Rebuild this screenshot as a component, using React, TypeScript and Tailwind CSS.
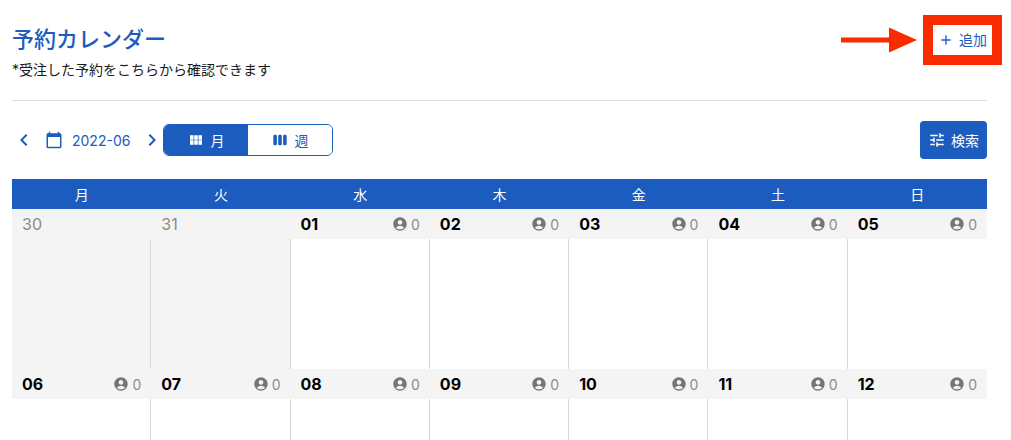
import React from "react";
import {
  MdAccountCircle,
  MdAdd,
  MdCalendarToday,
  MdChevronLeft,
  MdChevronRight,
  MdTune,
  MdViewModule,
  MdViewWeek,
} from "react-icons/md";

const weekdays = ["月", "火", "水", "木", "金", "土", "日"];

const rows = [
  [
    { day: "30", muted: true },
    { day: "31", muted: true },
    { day: "01" },
    { day: "02" },
    { day: "03" },
    { day: "04" },
    { day: "05" },
  ],
  [
    { day: "06" },
    { day: "07" },
    { day: "08" },
    { day: "09" },
    { day: "10" },
    { day: "11" },
    { day: "12" },
  ],
];

function DayCell({ day, muted, last }: { day: string; muted?: boolean; last: boolean }) {
  return (
    <div className="flex flex-col">
      <div className="flex h-[30px] items-center justify-between bg-[#f4f4f4] pl-[10px] pr-[10px]">
        {muted ? (
          <span className="text-[16px] text-[#8c8c8c]">{day}</span>
        ) : (
          <>
            <span className="text-[16px] font-bold text-black">{day}</span>
            <span className="flex items-center gap-[3px] text-[14px] text-[#8c8c8c]">
              <MdAccountCircle size={16} className="text-[#757575]" />0
            </span>
          </>
        )}
      </div>
      <div
        className={`h-[130px] ${muted ? "bg-[#f4f4f4]" : "bg-white"} ${
          last ? "" : "border-r border-[#d9d9d9]"
        }`}
      />
    </div>
  );
}

export default function App() {
  return (
    <div
      className="relative h-[440px] w-[1011px] overflow-hidden bg-white"
      style={{ fontFamily: 'Inter, "Noto Sans CJK JP", sans-serif' }}
    >
      <div className="px-[12px] pr-[24px] pt-[25px]">
        <div className="flex items-start justify-between">
          <div>
            <h1 className="text-[22px] font-medium leading-[28px] text-[#1c5cbe]">予約カレンダー</h1>
            <p className="mt-[7px] text-[14px] leading-[20px] text-[#1a1a1a]">*受注した予約をこちらから確認できます</p>
          </div>
          <button className="mt-[5px] flex items-center gap-[5px] text-[14px] leading-[20px] text-[#1c5cbe]">
            <MdAdd size={16} />
            追加
          </button>
        </div>

        <div className="mt-[20px] h-px bg-[#dedede]" />

        <div className="mt-[20px] flex h-[38px] items-center justify-between">
          <div className="flex items-center">
            <MdChevronLeft size={24} className="text-[#1c5cbe]" />
            <MdCalendarToday size={18} className="ml-[9px] text-[#1c5cbe]" />
            <span className="ml-[9px] text-[14px] text-[#1c5cbe]">2022-06</span>
            <MdChevronRight size={24} className="ml-[10px] text-[#1c5cbe]" />
            <div className="ml-[-1px] flex h-[32px] w-[170px] overflow-hidden rounded-[6px] border border-[#1c5cbe] text-[14px]">
              <div className="flex w-[84px] items-center justify-center gap-[6px] bg-[#1c5cbe] text-white">
                <MdViewModule size={16} />月
              </div>
              <div className="flex flex-1 items-center justify-center gap-[6px] bg-white text-[#1c5cbe]">
                <MdViewWeek size={16} />週
              </div>
            </div>
          </div>
          <button className="flex h-[38px] w-[67px] items-center justify-center gap-[5px] rounded-[4px] bg-[#1c5cbe] text-[14px] text-white">
            <MdTune size={18} />
            検索
          </button>
        </div>

        <div className="mt-[20px] grid h-[30px] grid-cols-7 bg-[#1c5cbe]">
          {weekdays.map((w) => (
            <div key={w} className="flex items-center justify-center text-[14px] text-white">
              {w}
            </div>
          ))}
        </div>

        {rows.map((row, i) => (
          <div key={i} className="grid grid-cols-7">
            {row.map((c, j) => (
              <DayCell key={c.day} day={c.day} muted={c.muted} last={j === 6} />
            ))}
          </div>
        ))}
      </div>

      {/* annotation on top of the screenshot */}
      <div className="absolute left-[923px] top-[15px] h-[50px] w-[79px] border-[10px] border-[#fb2b00]" />
      <svg className="absolute left-[840px] top-[27px]" width="78" height="26" viewBox="0 0 78 26">
        <rect x="1" y="10.5" width="50" height="5" fill="#fb2b00" />
        <polygon points="49,0.5 77,13 49,25.5" fill="#fb2b00" />
      </svg>
    </div>
  );
}
